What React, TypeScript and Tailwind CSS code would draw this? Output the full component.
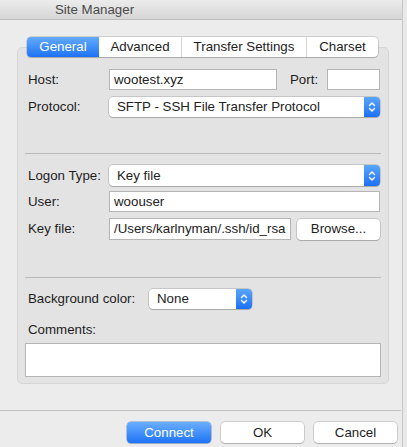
import React from 'react';

const font = { fontFamily: '"Liberation Sans", Arial, sans-serif' };

function Stepper() {
  return (
    <div className="flex h-full w-[16px] items-center justify-center rounded-r-[4px] bg-gradient-to-b from-[#5aa6fd] to-[#1b6ff5]">
      <svg width="8" height="12" viewBox="0 0 8 12" fill="none" stroke="white" strokeWidth="1.4" strokeLinecap="round" strokeLinejoin="round">
        <path d="M1.5 4.5 L4 2 L6.5 4.5" />
        <path d="M1.5 7.5 L4 10 L6.5 7.5" />
      </svg>
    </div>
  );
}

function Select({ value, className }: { value: string; className: string }) {
  return (
    <div className={`flex items-stretch rounded-[4px] bg-white shadow-[0_0_0_0.5px_rgba(0,0,0,0.25),0_1px_1px_rgba(0,0,0,0.15)] ${className}`}>
      <div className="flex flex-1 items-center pl-[8px] text-[#222]">{value}</div>
      <Stepper />
    </div>
  );
}

function Field({ value, className }: { value?: string; className: string }) {
  return (
    <div className={`flex items-center border border-[#b5b5b5] bg-white pl-[4px] text-[#222] ${className}`}>
      {value}
    </div>
  );
}

function Separator() {
  return <div className="mx-[7px] h-px bg-[#b9b9b9]" />;
}

export default function App() {
  const tabs = ['General', 'Advanced', 'Transfer Settings', 'Charset'];
  const widths = ['w-[72px]', 'w-[82px]', 'w-[125px]', 'w-[72px]'];

  return (
    <div className="flex h-[447px] w-[407px] bg-[#e9e9e9] text-[13.3px] text-[#1d1d1d]" style={font}>
      <div className="flex h-full w-[403px] flex-col border-r border-[#c6c6c6] bg-[#ececec]">
        {/* Title bar */}
        <div className="flex h-[20px] items-center border-b border-[#bdbdbd] bg-gradient-to-b from-[#ececec] to-[#d6d6d6] pl-[55px] text-[13.3px] text-[#4a4a4a]">
          Site Manager
        </div>

        {/* Tabs + group box */}
        <div className="ml-[17px] mt-[17px] w-[372px]">
          <div className="relative z-10 ml-[10px] flex h-[20px] w-fit rounded-[4px] bg-white shadow-[0_0_0_0.5px_rgba(0,0,0,0.25),0_1px_1px_rgba(0,0,0,0.15)]">
            {tabs.map((t, i) => (
              <div
                key={t}
                className={`flex items-center justify-center ${widths[i]} ${
                  i === 0
                    ? 'rounded-l-[4px] bg-gradient-to-b from-[#62aafd] to-[#1c72f5] text-white'
                    : 'text-[#1d1d1d]'
                } ${i > 1 ? 'border-l border-[#d4d4d4]' : ''}`}
              >
                {t}
              </div>
            ))}
          </div>

          <div className="-mt-[10px] flex h-[337px] flex-col rounded-[5px] border border-[#d6d6d6] bg-[#e3e3e3] pt-[21px]">
            {/* Host */}
            <div className="flex h-[21px] items-center pl-[10px] pr-[8px]">
              <span className="w-[81px]">Host:</span>
              <Field value="wootest.xyz" className="h-[21px] w-[168px]" />
              <span className="ml-[13px] w-[37px]">Port:</span>
              <Field className="h-[21px] w-[53px]" />
            </div>
            {/* Protocol */}
            <div className="mt-[7px] flex h-[20px] items-center pl-[10px] pr-[8px]">
              <span className="w-[81px]">Protocol:</span>
              <Select value="SFTP - SSH File Transfer Protocol" className="h-[20px] flex-1" />
            </div>

            <div className="mt-[36px]">
              <Separator />
            </div>

            {/* Logon type */}
            <div className="mt-[11px] flex h-[21px] items-center pl-[10px] pr-[8px]">
              <span className="w-[81px]">Logon Type:</span>
              <Select value="Key file" className="h-[21px] flex-1" />
            </div>
            {/* User */}
            <div className="mt-[5px] flex h-[21px] items-center pl-[10px] pr-[8px]">
              <span className="w-[81px]">User:</span>
              <Field value="woouser" className="h-[21px] flex-1" />
            </div>
            {/* Key file */}
            <div className="mt-[6px] flex h-[22px] items-center pl-[10px] pr-[8px]">
              <span className="w-[81px]">Key file:</span>
              <Field value="/Users/karlnyman/.ssh/id_rsa" className="h-[22px] w-[182px] overflow-hidden whitespace-nowrap" />
              <div className="ml-[6px] flex h-[21px] flex-1 items-center justify-center rounded-[4px] bg-white shadow-[0_0_0_0.5px_rgba(0,0,0,0.25),0_1px_1px_rgba(0,0,0,0.15)]">
                Browse...
              </div>
            </div>

            <div className="mt-[37px]">
              <Separator />
            </div>

            {/* Background color */}
            <div className="mt-[11px] flex h-[20px] items-center pl-[10px]">
              <span className="w-[121px]">Background color:</span>
              <Select value="None" className="h-[20px] w-[103px]" />
            </div>

            <div className="mt-[13px] pl-[10px] leading-[16px]">Comments:</div>
            <div className="mx-[7px] mt-[5px] h-[34px] border border-[#b5b5b5] bg-white" />
          </div>
        </div>

        {/* Bottom bar */}
        <div className="mt-[26px] h-px w-[401px] bg-[#c2c2c2]" />
        <div className="mt-[11px] flex gap-[10px] pl-[127px]">
          <div className="flex h-[21px] w-[84px] items-center justify-center rounded-[4px] bg-gradient-to-b from-[#69aefd] to-[#1d72f5] text-white shadow-[0_0_0_0.5px_rgba(0,60,180,0.5),0_1px_1px_rgba(0,0,0,0.15)]">
            Connect
          </div>
          <div className="flex h-[21px] w-[83px] items-center justify-center rounded-[4px] bg-white shadow-[0_0_0_0.5px_rgba(0,0,0,0.25),0_1px_1px_rgba(0,0,0,0.15)]">
            OK
          </div>
          <div className="flex h-[21px] w-[83px] items-center justify-center rounded-[4px] bg-white shadow-[0_0_0_0.5px_rgba(0,0,0,0.25),0_1px_1px_rgba(0,0,0,0.15)]">
            Cancel
          </div>
        </div>
      </div>
    </div>
  );
}
